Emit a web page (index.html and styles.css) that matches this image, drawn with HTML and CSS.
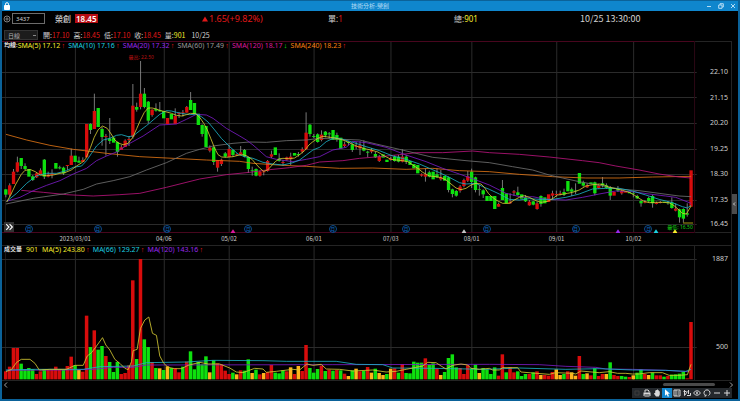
FILE: index.html
```html
<!DOCTYPE html>
<html lang="zh-Hant">
<head>
<meta charset="utf-8">
<title>技術分析-榮創</title>
<link rel="stylesheet" href="styles.css">
</head>
<body>
<div class="window">
  <header class="titlebar">
    <svg class="lock" viewBox="0 0 6 8"><path d="M1.5 4V2.2a1.5 1.5 0 0 1 3 0V4" fill="none" stroke="#fff"/><path d="M.5 3.5h5V7.500h-5z" fill="#fff"/></svg>
    <h1>技術分析-榮創</h1>
    <div class="winctl">
      <button aria-label="最小化"><svg viewBox="0 0 6 6"><path d="M1 3.500h4"/></svg></button>
      <button aria-label="還原"><svg viewBox="0 0 6 6"><path d="M2 2V.7h3.300V4H4M.7 2H4v3.300H.7z"/></svg></button>
      <button aria-label="關閉"><svg viewBox="0 0 6 6"><path d="M1 1l4 4M5 1l-4 4"/></svg></button>
    </div>
  </header>

  <section class="quote">
    <div class="stock">
      <button class="add" aria-label="加入"><svg viewBox="0 0 8 8"><circle cx="4" cy="4" r="3"/><path d="M4 2.300v3.400M2.300 4h3.400"/></svg></button>
      <input type="text" value="3437" aria-label="股票代號">
      <strong>榮創</strong><b class="last">18.45</b>
    </div>
    <div class="delta red"><svg viewBox="0 0 6 6"><path d="M3 .5L6 5.500H0z"/></svg>1.65(+9.82%)</div>
    <div>單:<span class="red">1</span></div>
    <div>總:<span class="yellow">901</span></div>
    <time>10/25 13:30:00</time>
  </section>

  <section class="ohlc">
    <select aria-label="週期"><option>日線</option></select>
    <span>開:<i class="red">17.10</i></span>
    <span>高:<i class="red">18.45</i></span>
    <span>低:<i class="red">17.10</i></span>
    <span>收:<i class="red">18.45</i></span>
    <span>量:<i class="yellow">901</i></span>
    <span class="day">10/25</span>
  </section>

  <main class="charts">
    <div class="panels">
      <section class="panel price">
        <svg class="plot" id="price" viewBox="6 -57 2190 576" preserveAspectRatio="none"></svg>
        <div class="legend">
          <b>均線:</b><span class="yellow">SMA(5) 17.12<u class="up">↑</u></span><span class="cyan">SMA(10) 17.16<u class="up">↑</u></span><span class="purple">SMA(20) 17.32<u class="up">↑</u></span><span class="grey">SMA(60) 17.49<u class="up">↑</u></span><span class="pink">SMA(120) 18.17<u class="down">↓</u></span><span class="orange">SMA(240) 18.23<u class="up">↑</u></span>
        </div>
        <div class="marks" id="priceMarks"></div>
        <button class="expand" aria-label="展開"><svg viewBox="0 0 9 9"><path d="M2 2l2.500 2.500L2 7M5 2l2.500 2.500L5 7"/></svg></button>
      </section>
      <div class="dates" id="dates"></div>
      <section class="panel volume">
        <svg class="plot" id="volume" viewBox="6 15 2190 408" preserveAspectRatio="none"></svg>
        <div class="legend">
          <b>成交量</b><span class="yellow total">901</span><span class="yellow">MA(5) 243.80<u class="up">↑</u></span><span class="cyan">MA(66) 129.27<u class="up">↑</u></span><span class="purple">MA(120) 143.16<u class="up">↑</u></span>
        </div>
        <div class="marks" id="volumeMarks"></div>
      </section>
    </div>
    <button class="handle" aria-label="側欄"><svg viewBox="0 0 4 6"><path d="M3 1.500L1.500 3 3 4.500"/></svg></button>
  </main>

  <div class="scroll">
    <button aria-label="向左"><svg viewBox="0 0 5 6"><path d="M4 .5L1.500 3 4 5.500"/></svg></button>
    <div class="track"><div class="thumb"></div></div>
    <button aria-label="向右"><svg viewBox="0 0 5 6"><path d="M1 .5L3.500 3 1 5.500"/></svg></button>
  </div>

  <footer class="tools">
    <button class="dim" aria-label="圖層"><svg viewBox="0 0 10 10"><path d="M3 3h4v4H3z"/></svg></button>
    <button aria-label="列印"><svg viewBox="0 0 10 10"><path d="M3 4.500V2h3l1 1v1.500"/><path class="fill" d="M1.500 4.500h7v3.500h-1V6.500h-5V8h-1z"/><path d="M2.500 8h5"/></svg></button>
    <button aria-label="平移"><svg viewBox="0 0 10 10"><path class="fill" d="M3.200 5V2.600h.9V2h1v-.4h.9V2.300h.9v1H7.800V6.500L6.800 8.500H4L2 5.800l.5-.7z"/></svg></button>
    <button class="on" aria-label="選取"><svg viewBox="0 0 10 10"><path class="fill" d="M3 1.200v6.500l1.700-1.500 1.100 2.500 1.200-.5-1.100-2.500H8z"/></svg></button>
    <button aria-label="資訊欄"><svg viewBox="0 0 10 10"><path d="M2 2h6v6H2zM4 2v6M5.500 4h1.500M5.500 6h1.500"/></svg></button>
    <button aria-label="畫線"><svg viewBox="0 0 10 10"><path d="M2.500 2v5.500M1.500 3.500h3M2.500 7.500l3-4M6.500 2v4M5 7.500h3.500V5"/></svg></button>
    <button aria-label="顯示"><svg viewBox="0 0 10 10"><path d="M1.500 5q3.500-4.500 7 0q-3.500 4.500-7 0z"/><circle class="fill" cx="5" cy="5" r="1"/></svg></button>
    <button aria-label="重設"><svg viewBox="0 0 10 10"><path d="M3.500 7.500A3 3 0 1 1 6.500 7.500M2.500 8h1.500V6.500"/></svg></button>
    <button aria-label="縮小"><svg viewBox="0 0 10 10"><path d="M2 5h6"/></svg></button>
    <button aria-label="放大"><svg viewBox="0 0 10 10"><path d="M2 5h6M5 2v6"/></svg></button>
  </footer>
</div>
<script src="chart.js"></script>
</body>
</html>
```

FILE: styles.css
```css
* { box-sizing: border-box; margin: 0; padding: 0; }
body {
  background: #000;
  color: #d0d0d0;
  font: 7px/10px "Noto Sans", "Noto Sans CJK TC", sans-serif;
}
button { background: none; border: 0; color: inherit; font: inherit; display: block; }
svg { display: block; fill: none; stroke: currentColor; }
i { font-style: normal; }

.window {
  display: flex;
  flex-direction: column;
  min-height: 100vh;
  border: solid #0b6299;
  border-width: 0 2px 2px;
}

.red { color: #e01818; }
.yellow { color: #f6ec2c; }
.cyan { color: #1cd0e0; }
.purple { color: #9a28ec; }
.grey { color: #989898; }
.pink { color: #dc189c; }
.orange { color: #f8800e; }

.titlebar {
  display: grid;
  grid-template-columns: 1fr auto 1fr;
  align-items: center;
  height: 11px;
  padding: 0 2px;
  background: #0f86cd;
  border-top: 1px solid #0b6299;
  color: #fff;
}
.titlebar h1 { font-size: 6px; line-height: 8px; font-weight: 400; color: #b4dcf4; }
.lock { width: 6px; height: 8px; }
.winctl { display: flex; justify-content: flex-end; gap: 6px; color: #b4dcf4; }
.winctl svg { width: 6px; height: 6px; }

.quote {
  display: grid;
  grid-template-columns: 200fr 126fr 126fr 126fr 158fr;
  align-items: center;
  height: 15px;
  font-size: 8px;
}
.stock { display: flex; align-items: center; }
.stock strong { margin: 0 4px 0 10px; font-weight: 500; }
.add { margin: 0 1px; color: #808080; }
.add svg { width: 8px; height: 8px; }
.stock input {
  width: 33px;
  height: 11px;
  padding: 0 3px;
  background: #000;
  border: 1px solid #6c6c6c;
  color: #d0d0d0;
  font: inherit;
  font-size: 6px;
}
.last { padding: 0 1px; background: #b80c12; color: #fff; font-weight: 600; line-height: 9px; }
.delta { display: flex; align-items: center; gap: 1px; font-size: 9px; }
.delta svg { width: 6px; height: 6px; fill: currentColor; stroke: none; }
.quote time { font-family: "Noto Sans CJK TC", sans-serif; font-size: 9px; }

.ohlc {
  display: flex;
  align-items: center;
  gap: 4px;
  height: 15px;
  padding: 2px 2px 0;
  font-family: "Noto Sans CJK TC", sans-serif;
}
.ohlc select {
  appearance: none;
  width: 34px;
  height: 10px;
  margin-right: 1px;
  padding: 0 3px;
  border: 1px solid #333;
  background: linear-gradient(#888, #888) 28px 4px / 3px 1px no-repeat #1c1c1c;
  color: #b0b0b0;
  font: inherit;
  font-size: 6px;
}
.ohlc .day { margin-left: 2px; }

.charts { flex: 1; display: grid; grid-template-columns: 1fr 6px; align-items: stretch; }
.panels { display: flex; flex-direction: column; }
.panel { position: relative; border-right: 1px solid #242424; }
.price { flex: 192 1 0; }
.volume { flex: 136 1 0; }
.plot { position: absolute; inset: 0; width: 100%; height: 100%; stroke: none; }
.legend { position: relative; display: flex; gap: 3px; padding-left: 2px; line-height: 9px; white-space: nowrap; }
.legend b { font-size: 6px; font-weight: 500; color: #fff; }
.price .legend b { margin-right: -3px; }
.legend u { margin-left: 1px; text-decoration: none; font-family: "Liberation Sans", sans-serif; font-weight: 700; display: inline-block; width: 4px; text-align: center; }
.legend .total { margin: 0 1px; }
.up { color: #f01818; }
.down { color: #14e814; }

.marks span, .dates span, .marks svg { position: absolute; }
.tick { right: 3px; transform: translateY(-50%); }
.dates { position: relative; height: 12px; font-family: "Noto Sans CJK TC", sans-serif; font-size: 6px; line-height: 11px; border-right: 1px solid #242424; }
.dates span { transform: translateX(-50%); }
.month {
  width: 8px;
  height: 8px;
  border: 1px solid #0c4c8c;
  border-radius: 50%;
  color: #0f6ac4;
  font-size: 5px;
  line-height: 6px;
  text-align: center;
  transform: translate(-50%, -50%);
}
.tri { width: 5px; height: 4px; fill: currentColor; stroke: none; transform: translate(-50%, -50%); }
.peak { font-size: 5px; line-height: 6px; transform: translate(-50%, -50%); white-space: nowrap; }
.high { color: #b81010; }
.low { color: #14d014; }
.white { color: #c4c4c4; }

.expand { position: absolute; left: 2px; bottom: 1px; background: #333; color: #fff; }
.expand svg { width: 10px; height: 10px; }
.handle { align-self: center; width: 5px; height: 20px; margin-bottom: 14px; background: #4c4c4c; }
.handle svg { width: 4px; height: 6px; }

.scroll { display: flex; align-items: center; height: 7px; padding: 0 4px 0 1px; color: #a0a0a0; }
.scroll svg { width: 5px; height: 6px; }
.track { flex: 1; }
.thumb { width: 7.3%; height: 3px; margin-left: 90.8%; border-radius: 2px; background: #4a4a4a; }

.tools { display: flex; justify-content: flex-end; padding: 0 6px 1px; }
.tools button { background: #24282c; color: #d8d8d8; }
.tools .on { background: #1287cf; color: #fff; }
.tools .dim { color: #3c3c3c; }
.tools svg { width: 10px; height: 10px; }
.tools .fill { fill: currentColor; stroke: none; }
```

FILE: chart.js
```js
// Plot units: x starts at 6, one session every STEP units.
const X0 = 17.5, STEP = 11.565, LEFT = 6, WIDTH = 2190;
const COLORS = { r: '#d80c0c', g: '#0ee00e', y: '#ffb41c' };

// colour, body top, body bottom [, high, low]
const candles = `g388 404 388 412,r376 404 370 410,r335 372 327 372,r307 335 290 337,g294 318 294 327,g318 327 310 330,g327 350,g349 360 345 363,r340 352 338 354,r331 342 325 342,g299 350 297 357,r344 350 335 352,r340 345 328 355,g309 326,g322 325 317 328,g323 340 320 345,r315 318 315 330,r287 315 266 315,g287 306,g302 308 290 308,r300 306 292 306,r192 292,g192 210 190 222,r153 207 101 207,g144 201,g207 231 200 257,r228 231 222 287,g236 243 174 252,g233 248,g246 276 245 290,r262 270 255 270,r242 261 238 261,r237 240 228 258,r137 230 72 236,g141 149 128 155,r101 141 3 148,g101 141 84 145,g125 182 123 190,r149 165 148 170,g147 152 130 155,g150 154 126 155,g153 175,r174 192,g162 178,r168 192 145 192,r158 162 158 174,r157 160 150 170,r141 158 138 158,g120 150 96 150,g129 163,g161 195,g195 222 193 230,g198 261,r263 272 256 277,g262 306 260 315,r300 323 300 335,r299 312 296 318,g280 290 276 292,r267 291 255 291,g270 285 268 290,r283 286 280 288,r277 283 258 285,g270 290 267 292,
g291 327 290 339,g330 332 320 347,g327 347 325 349,r335 347 332 350,r334 337 332 346,r303 333 300 335,r283 290 272 294,g262 285,g296 303 280 305,r306 309 300 318,r292 299 290 302,r290 298 278 315,g279 287,g282 285 276 290,r268 275 262 280,r218 268 157 268,g194 222 192 230,g228 231 222 234,g223 246 220 248,r224 240 211 244,g215 226 213 232,g220 223 216 236,g210 240,g225 240 218 245,g233 266,r253 258 245 262,g246 249 244 256,g253 270 250 276,r258 261 246 268,r256 265 244 285,g263 272 241 274,g275 278 272 292,r270 275 264 280,g282 292 275 294,r290 303 285 306,g283 293,g299 306,r296 300 290 302,g290 303 286 305,g290 305 285 307,r290 305 268 307,g290 305 285 312,g303 315,g312 325,g315 340,r343 347 340 350,r343 350 325 365,g337 350 332 352,g335 358,g343 352 325 354,r352 358 330 362,g348 362,g352 390 350 397,g388 402 386 412,g393 407 390 410,r380 392 375 398,r360 378 356 382,r349 362 333 366,g335 366 326 384,g352 390 350 397,g388 390 375 407,g391 403 388 414,g408 423,
g408 423,g408 447,r432 440 428 440,g384 420 360 420,g400 430,r425 430 400 432,r394 398 390 408,g397 405 380 407,g403 416,g412 424 405 426,r425 436 420 437,g424 434 422 436,r430 447 425 449,g408 432 406 440,g412 430,r403 426,r400 407 392 420,r402 405 392 410,r400 403 392 406,g396 404 386 408,g363 394,g388 395 383 408,g392 394 370 402,g339 371,g367 377 362 380,r376 382 370 384,g367 372,g367 400 365 406,r376 384 372 386,g370 377 351 382,g376 384 370 386,g381 407 378 420,r396 407,g386 392 378 396,r392 400 388 404,r394 398,g396 400,g400 402 394 412,g408 415 404 417,g423 430 420 440,r425 428 420 430,g414 424 410 426,g408 430 404 443,r428 432 425 433,r426 429 423 430,g425 428,g428 430 423 434,g427 444 412 446,r446 452 430 454,g448 472 446 488,g447 476 445 488,g460 464 430 470,r331 440`
  .replace(/\n/g, '').split(',');

// colour, bar top
const volumes = `r394 r380 r324 r324 g371 g388 g384 g387 r402 r394 g388 r390 r390 r380 r388 g390 r378 r350 g376 y390 r395 r227 g321 r271 g329 g318 r348 g366 g396 g366 r402 r399 r376 r121 g357 r57 g298 g321 r366 g384 y385 g390 y379 g384 r385 r397 g380 r365 g334 g388 g366 g373 g349 y397 g361 r370 r373 r392 r402 g398 y403 r391 g392
g358 y399 g389 r403 y399 r396 r375 g398 g400 g391 r394 y382 r402 y378 r393 r315 g384 g398 g387 r377 g393 r389 g392 r390 g391 r401 y408 g391 y386 r394 g393 r381 y398 g386 y399 y405 g402 y386 r385 g398 r372 g399 g400 g365 g368 g368 r355 g374 g370 r386 y405 g396 g354 g343 g382 r384 r402 r376 g385 g374 y399 g384 g388
g402 g382 r407 r343 g397 r382 r397 g394 g408 g402 r402 g397 r394 y405 r405 r407 r396 y388 y405 g402 r394 y397 y407 r348 g402 y400 r406 g385 r408 r402 y402 g367 r405 r408 g408 g410 r411 y406 g398 g388 r402 y405 g398 r406 r406 g410 r408 g404 g403 g401 g396 r415 r246`.split(/\s+/);

const priceLines = {
  '#e07414': '18,223 80,240 150,256 220,268 320,280 420,290 520,295 620,300 720,304 760,310 850,316 920,319 1020,325 1120,324 1220,328 1300,325 1380,332 1470,335 1560,343 1660,350 1760,354 1860,354 1960,351 2076,349',
  '#b8147c': '64,391 130,397 200,404 280,408 360,404 420,400 500,382 600,357 680,344 750,337 800,330 870,323 920,316 960,306 1030,302 1080,295 1140,290 1200,284 1250,278 1330,278 1420,273 1470,278 1560,283 1650,291 1750,302 1800,308 1850,318 1920,330 1980,342 2040,351 2076,354',
  '#707070': '18,432 100,415 190,402 250,388 290,372 340,362 390,350 440,330 500,308 560,280 600,268 640,258 700,250 750,246 800,247 860,242 920,240 960,235 1030,238 1080,240 1130,252 1200,268 1250,280 1300,292 1350,297 1400,302 1470,308 1540,320 1600,330 1650,345 1690,354 1740,365 1800,376 1860,387 1920,392 1980,400 2040,408 2076,410',
  '#7a1cc4': '20,424 60,412 100,392 140,376 180,362 220,342 260,325 290,302 320,288 350,276 390,250 430,228 480,195 530,192 560,178 590,163 620,165 640,175 680,205 720,228 740,240 760,255 800,290 830,298 880,305 920,298 960,290 1000,270 1040,262 1060,244 1100,248 1160,262 1220,285 1280,305 1330,325 1380,342 1430,360 1470,375 1520,400 1570,412 1600,410 1640,418 1700,420 1750,412 1800,402 1850,393 1900,395 1950,402 2000,408 2030,412 2076,430',
  '#1cb0c4': '20,424 50,400 80,370 110,347 140,340 170,340 200,332 220,322 245,318 260,302 275,280 290,258 310,240 330,235 350,226 365,224 385,230 400,228 420,212 440,197 460,180 480,163 500,152 515,153 530,157 545,160 570,164 590,162 605,170 625,186 645,210 665,235 690,260 715,282 735,290 760,295 790,307 820,312 850,315 880,308 900,300 920,285 940,270 960,262 980,245 1005,233 1030,238 1060,247 1100,260 1140,272 1180,288 1220,298 1260,312 1290,325 1320,338 1350,352 1380,368 1400,372 1430,370 1450,380 1470,388 1500,402 1530,418 1560,420 1590,416 1620,418 1660,418 1700,412 1740,402 1780,387 1820,385 1860,385 1900,393 1940,405 1980,418 2020,428 2050,440 2065,444 2076,436',
  '#d4c832': '20,426 32,405 46,375 64,343 75,331 92,329 106,335 121,345 140,347 160,345 180,340 195,338 214,330 230,318 249,306 258,295 272,262 283,232 295,209 308,198 322,205 334,222 345,240 357,250 370,254 385,250 399,232 411,205 422,180 433,158 445,144 457,144 470,147 482,152 497,155 515,160 530,166 545,168 560,164 572,160 588,161 600,172 612,190 622,208 633,235 645,265 655,284 666,291 680,292 700,290 715,286 730,284 742,288 757,298 769,312 781,325 792,334 804,330 815,318 827,305 838,297 850,295 870,296 885,294 900,284 915,272 928,255 940,245 955,235 970,229 985,231 1000,233 1015,236 1030,240 1050,248 1070,258 1095,266 1115,270 1135,276 1155,288 1175,298 1190,300 1210,302 1225,305 1240,315 1255,325 1270,337 1290,348 1310,350 1325,353 1340,360 1355,372 1370,384 1385,389 1400,385 1415,375 1430,370 1445,372 1455,382 1467,400 1475,408 1490,420 1510,430 1530,430 1545,420 1560,412 1575,407 1590,412 1610,422 1625,427 1645,424 1660,416 1675,405 1690,403 1705,400 1720,397 1740,390 1760,378 1775,375 1800,372 1815,375 1830,382 1850,386 1870,391 1890,397 1905,405 1920,415 1935,424 1950,428 1970,427 1990,427 2010,428 2025,437 2040,450 2050,460 2062,462 2076,438'
};
const volumeLines = {
  '#7a1cc4': '18,391 200,390 280,388 340,382 400,382 440,375 1000,374 1470,373 1620,374 1700,379 1790,382 1820,387 1900,388 2000,391 2070,395',
  '#1cb0c4': '18,390 100,388 250,388 300,380 400,378 440,368 560,366 640,361 790,362 860,364 1010,364 1070,373 1150,374 1180,384 1300,385 1460,388 1560,384 1700,388 1800,386 1900,390 2000,391 2060,394 2076,388',
  '#d4c832': '18,395 35,388 50,367 64,358 90,358 105,370 118,390 150,388 200,388 225,376 250,376 262,348 275,338 290,318 308,293 318,315 330,330 345,358 360,370 375,385 385,389 395,365 400,332 412,328 422,265 435,240 447,231 458,280 470,286 480,348 492,370 505,382 525,386 545,386 565,376 600,367 625,372 660,372 690,384 710,396 730,398 746,392 765,385 790,387 800,397 830,394 880,388 900,390 912,380 922,372 940,376 965,373 980,387 1020,388 1060,393 1120,390 1160,396 1190,394 1220,388 1250,382 1270,378 1285,367 1310,368 1325,378 1340,387 1360,376 1385,372 1405,375 1415,385 1440,388 1470,385 1480,390 1500,390 1510,383 1555,383 1565,396 1600,399 1650,403 1670,398 1720,400 1730,402 1745,393 1800,398 1830,395 1855,400 1880,400 1900,402 1920,402 1950,398 1990,398 2010,406 2040,406 2065,404 2076,373'
};

const days = [[226, '2023/03/01'], [492, '04/06'], [688, '05/02'], [943, '06/01'], [1174, '07/03'], [1417, '08/01'], [1672, '09/01'], [1903, '10/02']];
const prices = [[37, '22.10'], [113, '21.15'], [190, '20.20'], [267, '19.25'], [343, '18.30'], [421, '17.35'], [493, '16.45']];
const amounts = [[58, '1887'], [322, '500']];
const months = [87, 294, 503, 746, 1000, 1220, 1462, 1729, 1948];
const triangles = [[700, 'pink'], [1393, 'white'], [1856, 'purple'], [1972, 'cyan'], [2029, 'yellow']];

const snap = v => Math.floor(v / 3) * 3 + 1.5;
const line = (x1, y1, x2, y2, c) => `<path d="M${x1} ${y1}L${x2} ${y2}" stroke="${c}" stroke-width="3"/>`;
const rect = (x, y, w, h, c) => `<rect x="${x}" y="${y}" width="${w}" height="${h}" fill="${c}"/>`;
const curves = set => Object.entries(set).map(([c, p]) => `<polyline points="${p}" fill="none" stroke="${c}" stroke-width="2.500" stroke-linejoin="round"/>`).join('');
const left = x => (x - LEFT) / WIDTH * 100;

function grid(rows, top, bottom) {
  let s = line(snap(17), top, snap(17), bottom, '#1c1c1c');
  for (const [x] of days) s += line(snap(x), top, snap(x), bottom, '#2b2b2b');
  for (const [y] of rows) s += line(6, snap(y), 2093, snap(y), '#2b2b2b');
  return s;
}

let s = grid(prices, -57, 519);
s += line(2088, -55.5, 2196, -55.5, '#242424') + line(6, -55.5, 2088, -55.5, '#48061e');
s += line(2088, 517.5, 2196, 517.5, '#242424') + line(6, 517.5, 2088, 517.5, '#48061e');
s += line(2086.5, -57, 2086.5, 519, '#2c0814');
candles.forEach((d, i) => {
  const x = X0 + i * STEP, [t, b, h, l] = d.slice(1).split(' ').map(Number);
  if (h !== undefined) s += `<path d="M${x} ${h}V${l}" stroke="#909090" stroke-width="2.500"/>`;
  s += rect(x - 5, t, 10, b - t, COLORS[d[0]]);
});
s += curves(priceLines) + line(2052, 489, 2082, 489, '#a89c10');
document.getElementById('price').innerHTML = s;

s = grid(amounts, 15, 423) + line(6, 16.5, 2196, 16.5, '#242424') + line(6, 421.5, 2196, 421.5, '#242424');
s += line(2086.5, 15, 2086.5, 423, '#242424');
volumes.forEach((d, i) => {
  const t = +d.slice(1);
  s += rect(X0 + i * STEP - 5.5, t, 10.5, 418 - t, COLORS[d[0]]);
});
document.getElementById('volume').innerHTML = s + curves(volumeLines);

const ticks = (rows, top, h) => rows.map(([y, t]) => `<span class="tick" style="top:${(y - top) / h * 100}%">${t}</span>`).join('');
const at = (x, y) => `style="left:${left(x)}%;top:${(y + 57) / 576 * 100}%"`;
document.getElementById('priceMarks').innerHTML = ticks(prices, -57, 576)
  + months.map(x => `<span class="month" ${at(x, 506)}>月</span>`).join('')
  + triangles.map(([x, c]) => `<svg class="tri ${c}" viewBox="0 0 4 3" ${at(x, 512)}><path d="M2 0l2 3H0z"/></svg>`).join('')
  + `<span class="peak high" ${at(424, -9)}>最高: 22.50</span><span class="peak low" ${at(2043, 501)}>最低: 16.50</span>`;
document.getElementById('volumeMarks').innerHTML = ticks(amounts, 15, 408);
document.getElementById('dates').innerHTML = days.map(([x, t]) => `<span style="left:${left(x)}%">${t}</span>`).join('');
```
